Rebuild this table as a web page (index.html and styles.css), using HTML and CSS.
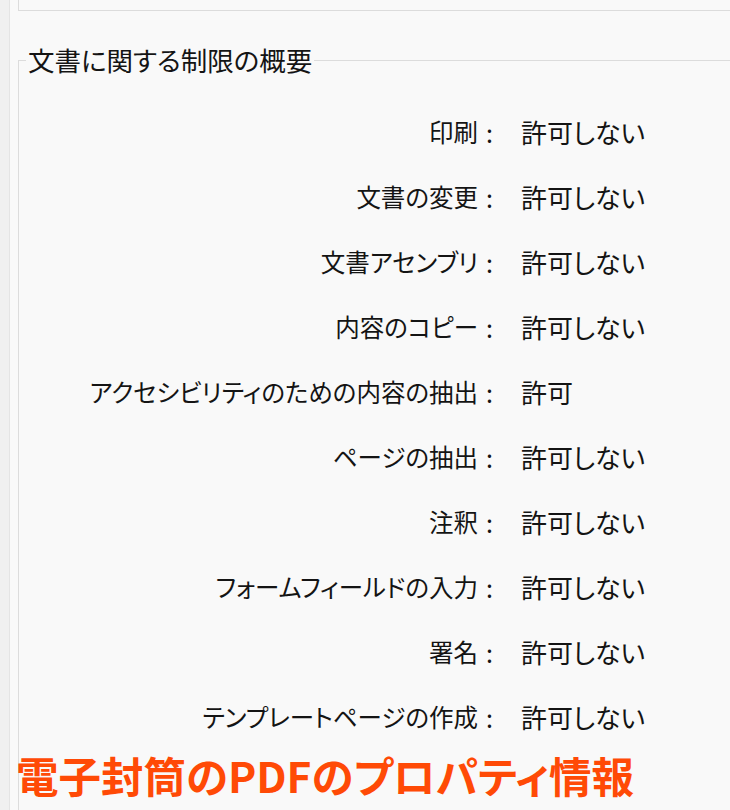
FILE: index.html
```html
<!DOCTYPE html>
<html lang="ja">
<head>
<meta charset="utf-8">
<link rel="stylesheet" href="styles.css">
</head>
<body>
<div class="window">
  <div class="side"></div>
  <div class="main">
    <div class="topbox"></div>
    <fieldset class="group">
      <legend class="group-title">文書に関する制限の概要</legend>
      <div class="rows">
        <div class="label">印刷</div><div class="colon">:</div><div class="value">許可しない</div>
        <div class="label">文書の変更</div><div class="colon">:</div><div class="value">許可しない</div>
        <div class="label">文書アセンブリ</div><div class="colon">:</div><div class="value">許可しない</div>
        <div class="label">内容のコピー</div><div class="colon">:</div><div class="value">許可しない</div>
        <div class="label">アクセシビリティのための内容の抽出</div><div class="colon">:</div><div class="value">許可</div>
        <div class="label">ページの抽出</div><div class="colon">:</div><div class="value">許可しない</div>
        <div class="label">注釈</div><div class="colon">:</div><div class="value">許可しない</div>
        <div class="label">フォームフィールドの入力</div><div class="colon">:</div><div class="value">許可しない</div>
        <div class="label">署名</div><div class="colon">:</div><div class="value">許可しない</div>
        <div class="label">テンプレートページの作成</div><div class="colon">:</div><div class="value">許可しない</div>
      </div>
    </fieldset>
  </div>
</div>
<div class="caption">電子封筒のPDFのプロパティ情報</div>
</body>
</html>
```

FILE: styles.css
```css
html, body {
  margin: 0;
  padding: 0;
  height: 810px;
  overflow: hidden;
  background: #f9f9f9;
}
body {
  position: relative;
  font-family: "Noto Sans CJK JP", "Noto Sans", sans-serif;
  color: #141414;
}
.window {
  display: flex;
  height: 810px;
}
.side {
  width: 9px;
  flex: none;
  background: #f0f0f0;
  border-right: 1px solid #e4e4e4;
}
.main {
  flex: 1;
  padding-left: 8px;
  display: flex;
  flex-direction: column;
}
.topbox {
  height: 10px;
  border-left: 1px solid #dcdcdc;
  border-bottom: 1px solid #dcdcdc;
  flex: none;
}
.group {
  margin: 32px 0 0 0;
  padding: 0;
  border: 1px solid #dcdcdc;
  border-right: none;
  border-bottom: none;
  flex: 1;
  min-width: 0;
}
.group-title {
  margin-left: 7px;
  padding: 0 2px;
  font-size: 26.5px;
  line-height: 34px;
  font-feature-settings: "palt";
}
.rows {
  display: grid;
  grid-template-columns: 459px 43px auto;
  grid-auto-rows: 65px;
  align-items: center;
  margin-top: 22px;
  line-height: 30px;
}
.label {
  text-align: right;
  font-size: 24.5px;
  font-feature-settings: "palt";
  white-space: nowrap;
}
.colon {
  padding-left: 8px;
  font-size: 25px;
}
.value {
  font-size: 26px;
  font-feature-settings: "palt";
}
.caption {
  position: absolute;
  left: 16px;
  top: 747px;
  font-size: 42.5px;
  line-height: 56px;
  font-weight: 700;
  color: #ff4a06;
  font-feature-settings: "palt";
  white-space: nowrap;
}
```
